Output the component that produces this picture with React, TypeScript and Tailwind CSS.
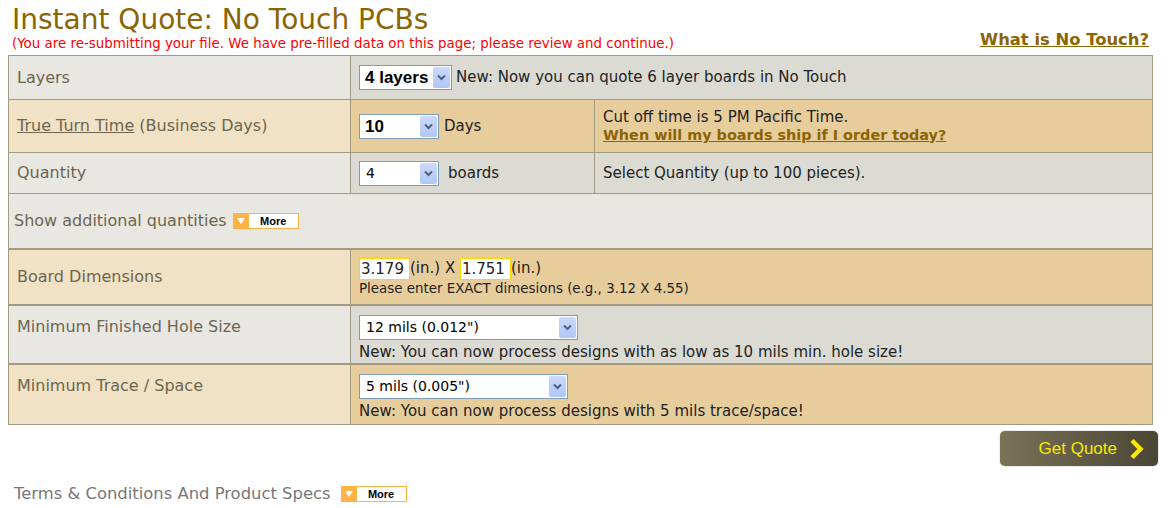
import React from 'react';

const verdana = { fontFamily: '"DejaVu Sans", Verdana, sans-serif' };
const arial = { fontFamily: '"Liberation Sans", Arial, sans-serif' };

function Select({ value, width, bold }: { value: string; width: string; bold?: boolean }) {
  return (
    <div className={`flex h-[25px] items-stretch border border-[#7f9db9] bg-white ${width}`}>
      {bold ? (
        <span className="flex-1 whitespace-nowrap pl-[5px] text-[17px] font-bold leading-[23px] text-black" style={arial}>
          {value}
        </span>
      ) : (
        <span className="flex-1 whitespace-nowrap pl-[6px] text-[14px] leading-[23px] text-black">{value}</span>
      )}
      <span className="m-[1px] flex w-[17px] items-center justify-center rounded-[2px] bg-gradient-to-b from-[#cbdafc] to-[#b1c6f5]">
        <svg width="9" height="7" viewBox="0 0 9 7">
          <path d="M1 1.5 L4.5 5 L8 1.5" stroke="#4d6185" strokeWidth="2" fill="none" />
        </svg>
      </span>
    </div>
  );
}

function MoreBadge() {
  return (
    <span className="inline-flex h-[16px] items-stretch border border-[#ffb347] bg-[#ffb347] align-middle">
      <span className="flex w-[15px] items-center justify-center">
        <svg width="8" height="6" viewBox="0 0 8 6">
          <path d="M0 0 H8 L4 6 Z" fill="#fff" />
        </svg>
      </span>
      <span className="flex w-[49px] items-center justify-center bg-white text-[11px] font-bold text-black" style={arial}>
        More
      </span>
    </span>
  );
}

const label = 'text-[16px] text-[#6d6650]';
const small = 'text-[15px] text-[#222]';

export default function App() {
  return (
    <div className="h-[508px] w-[1171px] bg-white" style={verdana}>
      <div className="flex items-end justify-between pl-[12px] pr-[22px] pt-[4px]">
        <div>
          <h1 className="text-[28px] leading-[32px] text-[#8b6404]">Instant Quote: No Touch PCBs</h1>
          <p className="text-[13.4px] leading-[15px] text-[#ff0000]">
            (You are re-submitting your file. We have pre-filled data on this page; please review and continue.)
          </p>
        </div>
        <a className="-mb-[2px] text-[16.4px] font-bold text-[#8b6404] underline">What is No Touch?</a>
      </div>

      <div className="ml-[8px] mt-[4px] w-[1145px] border border-[#a39a82]">
        {/* Layers */}
        <div className="flex h-[44px] border-b border-[#a39a82]">
          <div className={`flex w-[342px] items-center border-r border-[#a39a82] bg-[#e9e7e1] pl-[8px] ${label}`}>Layers</div>
          <div className="flex flex-1 items-center gap-[4px] bg-[#dcdbd3] pl-[8px]">
            <Select value="4 layers" width="w-[93px]" bold />
            <span className={small}>New: Now you can quote 6 layer boards in No Touch</span>
          </div>
        </div>

        {/* Turn time */}
        <div className="flex h-[53px] border-b border-[#a39a82]">
          <div className={`flex w-[342px] items-center border-r border-[#a39a82] bg-[#f1e1c5] pl-[8px] ${label}`}>
            <span className="underline">True Turn Time</span>&nbsp;(Business Days)
          </div>
          <div className="flex w-[244px] items-center gap-[5px] border-r border-[#a39a82] bg-[#e8cd9c] pl-[8px]">
            <Select value="10" width="w-[80px]" bold />
            <span className={small}>Days</span>
          </div>
          <div className="flex flex-1 flex-col justify-center bg-[#e8cd9c] pl-[8px] leading-[18px]">
            <span className={small}>Cut off time is 5 PM Pacific Time.</span>
            <a className="text-[14.4px] font-bold text-[#8b6404] underline">When will my boards ship if I order today?</a>
          </div>
        </div>

        {/* Quantity */}
        <div className="flex h-[41px] border-b border-[#a39a82]">
          <div className={`flex w-[342px] items-center border-r border-[#a39a82] bg-[#e9e7e1] pl-[8px] ${label}`}>Quantity</div>
          <div className="flex w-[244px] items-center gap-[9px] border-r border-[#a39a82] bg-[#dcdbd3] pl-[8px]">
            <Select value="4" width="w-[80px]" />
            <span className={small}>boards</span>
          </div>
          <div className={`flex flex-1 items-center bg-[#dcdbd3] pl-[8px] ${small}`}>Select Quantity (up to 100 pieces).</div>
        </div>

        {/* Additional quantities */}
        <div className="flex h-[56px] items-center gap-[6px] border-b-2 border-[#a39a82] bg-[#e9e7e1] pl-[5px]">
          <span className={label}>Show additional quantities</span>
          <MoreBadge />
        </div>

        {/* Board dimensions */}
        <div className="flex h-[56px] border-b-2 border-[#a39a82]">
          <div className={`flex w-[342px] items-center border-r border-[#a39a82] bg-[#f1e1c5] pl-[8px] ${label}`}>Board Dimensions</div>
          <div className="flex flex-1 flex-col justify-center bg-[#e8cd9c] pl-[8px]">
            <div className="flex items-center text-[15px] text-[#222]">
              <span className="h-[22px] w-[51px] border border-[#ffd400] bg-white pl-[1px] leading-[20px]">3.179</span>
              <span>(in.) X&nbsp;</span>
              <span className="h-[22px] w-[51px] border border-[#ffd400] bg-white pl-[1px] leading-[20px]">1.751</span>
              <span>(in.)</span>
            </div>
            <span className="text-[13.4px] leading-[17px] text-[#222]">Please enter EXACT dimesions (e.g., 3.12 X 4.55)</span>
          </div>
        </div>

        {/* Min hole */}
        <div className="flex h-[59px] border-b-2 border-[#a39a82]">
          <div className={`w-[342px] border-r border-[#a39a82] bg-[#e9e7e1] pl-[8px] pt-[9px] ${label}`}>Minimum Finished Hole Size</div>
          <div className="flex flex-1 flex-col gap-[1px] bg-[#dcdbd3] pl-[8px] pt-[9px]">
            <Select value={'12 mils (0.012")'} width="w-[219px]" />
            <span className={small}>New: You can now process designs with as low as 10 mils min. hole size!</span>
          </div>
        </div>

        {/* Trace / space */}
        <div className="flex h-[59px]">
          <div className={`w-[342px] border-r border-[#a39a82] bg-[#f1e1c5] pl-[8px] pt-[9px] ${label}`}>Minimum Trace / Space</div>
          <div className="flex flex-1 flex-col gap-[1px] bg-[#e8cd9c] pl-[8px] pt-[9px]">
            <Select value={'5 mils (0.005")'} width="w-[209px]" />
            <span className={small}>New: You can now process designs with 5 mils trace/space!</span>
          </div>
        </div>
      </div>

      <div className="flex justify-end pr-[13px] pt-[6px]">
        <button
          className="flex h-[35px] w-[158px] items-center justify-end gap-[11px] rounded-[5px] bg-gradient-to-r from-[#7a7358] to-[#4b4635] pr-[13px] text-[17px] text-[#f7ea00] shadow-[0_0_1px_#333]"
          style={arial}
        >
          Get Quote
          <svg width="17" height="22" viewBox="0 0 17 22">
            <path d="M4 2.5 L12.5 11 L4 19.5" stroke="#f7ea00" strokeWidth="4.5" fill="none" />
          </svg>
        </button>
      </div>

      <div className="flex items-center gap-[10px] pl-[14px] pt-[16px]">
        <span className="text-[16.4px] text-[#777]">Terms &amp; Conditions And Product Specs</span>
        <MoreBadge />
      </div>
    </div>
  );
}
